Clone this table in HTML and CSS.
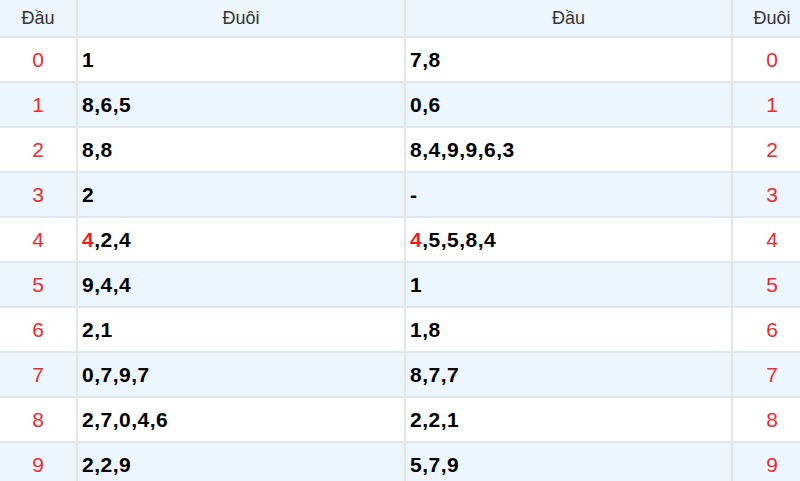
FILE: index.html
```html
<!DOCTYPE html>
<html lang="vi">
<head>
<meta charset="utf-8">
<link rel="stylesheet" href="styles.css">
</head>
<body>
<table class="loto">
  <colgroup>
    <col class="c-dau">
    <col class="c-list">
    <col class="c-list2">
    <col class="c-duoi">
  </colgroup>
  <thead>
    <tr><th>Đầu</th><th>Đuôi</th><th>Đầu</th><th>Đuôi</th></tr>
  </thead>
  <tbody>
    <tr><td class="num">0</td><td class="vals">1</td><td class="vals">7,8</td><td class="num">0</td></tr>
    <tr class="alt"><td class="num">1</td><td class="vals">8,6,5</td><td class="vals">0,6</td><td class="num">1</td></tr>
    <tr><td class="num">2</td><td class="vals">8,8</td><td class="vals">8,4,9,9,6,3</td><td class="num">2</td></tr>
    <tr class="alt"><td class="num">3</td><td class="vals">2</td><td class="vals">-</td><td class="num">3</td></tr>
    <tr><td class="num">4</td><td class="vals"><span class="hot">4</span>,2,4</td><td class="vals"><span class="hot">4</span>,5,5,8,4</td><td class="num">4</td></tr>
    <tr class="alt"><td class="num">5</td><td class="vals">9,4,4</td><td class="vals">1</td><td class="num">5</td></tr>
    <tr><td class="num">6</td><td class="vals">2,1</td><td class="vals">1,8</td><td class="num">6</td></tr>
    <tr class="alt"><td class="num">7</td><td class="vals">0,7,9,7</td><td class="vals">8,7,7</td><td class="num">7</td></tr>
    <tr><td class="num">8</td><td class="vals">2,7,0,4,6</td><td class="vals">2,2,1</td><td class="num">8</td></tr>
    <tr class="alt"><td class="num">9</td><td class="vals">2,2,9</td><td class="vals">5,7,9</td><td class="num">9</td></tr>
  </tbody>
</table>
</body>
</html>
```
FILE: styles.css
```css
html, body {
  margin: 0;
  padding: 0;
  background: #ffffff;
  overflow: hidden;
}

.loto {
  width: 811px;
  table-layout: fixed;
  border-collapse: separate;
  border-spacing: 0;
  font-family: "Liberation Sans", Arial, sans-serif;
}

.c-dau { width: 76px; }
.c-list { width: 328px; }
.c-list2 { width: 327px; }
.c-duoi { width: 80px; }

.loto th,
.loto td {
  box-sizing: border-box;
  padding: 0 4px;
  border-bottom: 2px solid #e1e6eb;
  vertical-align: middle;
}

.loto th + th,
.loto td + td {
  border-left: 2px solid #e1e6eb;
}

.loto th {
  height: 38px;
  background: #edf5fd;
  font-size: 18px;
  font-weight: normal;
  color: #333333;
  text-align: center;
}

.loto td {
  height: 45px;
}

.loto tr.alt td {
  background: #edf5fd;
}

.num {
  text-align: center;
  color: #ee2a2f;
  font-size: 21px;
}

.vals {
  text-align: left;
  color: #000000;
  font-weight: bold;
  font-size: 21px;
  letter-spacing: 0.5px;
  padding-left: 5px;
}

.hot {
  color: #ee1c25;
}
```
